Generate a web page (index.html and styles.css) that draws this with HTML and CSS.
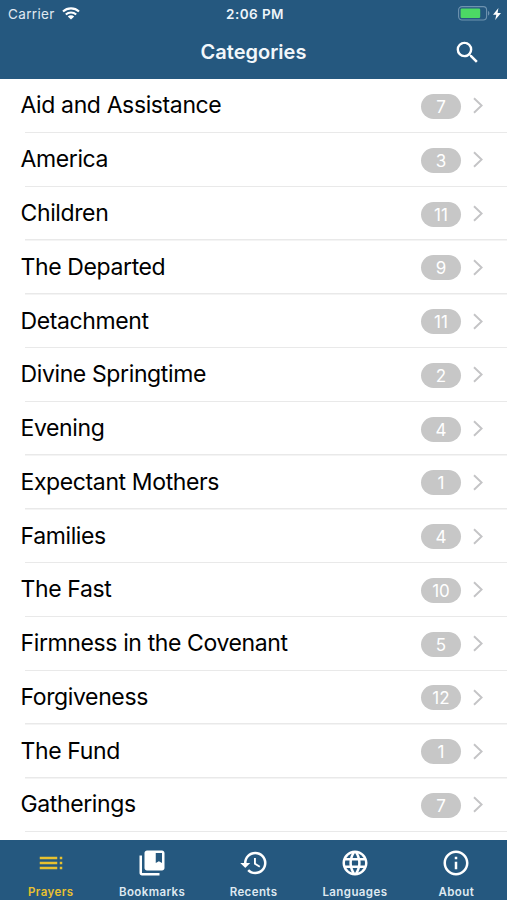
FILE: index.html
```html
<!DOCTYPE html>
<html lang="en">
<head>
    <meta charset="UTF-8">
    <meta name="viewport" content="width=device-width, initial-scale=1.0">
    <title>Categories</title>
    <link rel="stylesheet" href="styles.css">
</head>
<body>
    <header class="header">
        <!-- Status bar -->
        <div class="status-bar">
            <div class="carrier">
                <span>Carrier</span>
                <svg class="wifi" viewBox="0 0 18 13">
                    <path d="M1 4.6a11.6 11.6 0 0 1 16 0M3.8 7.5a7.6 7.6 0 0 1 10.4 0" fill="none" stroke="currentColor" stroke-width="2.1"/>
                    <path d="M9 12.6 5.8 9.5a4.6 4.6 0 0 1 6.4 0z" fill="currentColor"/>
                </svg>
            </div>
            <div class="time">2:06 PM</div>
            <div class="power">
                <svg class="battery" viewBox="0 0 32 15">
                    <rect x="0.6" y="0.6" width="28" height="13.4" rx="3.4" fill="none" stroke="#6f93b0" stroke-width="1.1"/>
                    <rect x="2.6" y="2.6" width="19.6" height="9.4" rx="1.2" fill="#4cd964"/>
                    <path d="M30 5v4.6c1.9-.7 1.9-3.9 0-4.6z" fill="#6f93b0"/>
                </svg>
                <svg class="bolt" viewBox="0 0 8 12">
                    <path d="M5.4 0 0 6.7h3.3L2.2 12 8 5H4.6z" fill="currentColor"/>
                </svg>
            </div>
        </div>
        <!-- Navigation bar -->
        <div class="nav-bar">
            <h1>Categories</h1>
            <button class="search-btn" aria-label="Search">
                <svg viewBox="0 0 24 24"><path d="M15.5 14h-.79l-.28-.27A6.471 6.471 0 0 0 16 9.5 6.5 6.5 0 1 0 9.5 16c1.61 0 3.09-.59 4.23-1.57l.27.28v.79l5 4.99L20.49 19l-4.99-5zm-6 0C7.01 14 5 11.99 5 9.5S7.01 5 9.5 5 14 7.01 14 9.5 11.99 14 9.5 14z"/></svg>
            </button>
        </div>
    </header>

    <main class="list" id="categoryList"></main>

    <nav class="tab-bar">
        <a class="tab active">
            <svg viewBox="0 0 24 24"><path d="M3 9h14V7H3v2zm0 4h14v-2H3v2zm0 4h14v-2H3v2zm16 0h2v-2h-2v2zm0-10v2h2V7h-2zm0 6h2v-2h-2v2z"/></svg>
            <span>Prayers</span>
        </a>
        <a class="tab">
            <svg viewBox="0 0 24 24"><path d="M4 6H2v14c0 1.1.9 2 2 2h14v-2H4V6z"/><path d="M20 2H8c-1.1 0-2 .9-2 2v12c0 1.1.9 2 2 2h12c1.1 0 2-.9 2-2V4c0-1.100-.9-2-2-2zm0 10l-2.500-1.500L15 12V4h5v8z"/></svg>
            <span>Bookmarks</span>
        </a>
        <a class="tab">
            <svg viewBox="0 0 24 24"><path d="M13 3a9 9 0 0 0-9 9H1l3.890 3.890.07.14L9 12H6c0-3.870 3.130-7 7-7s7 3.130 7 7-3.130 7-7 7c-1.930 0-3.680-.79-4.940-2.060l-1.420 1.420A8.954 8.954 0 0 0 13 21a9 9 0 0 0 0-18zm-1 5v5l4.280 2.540.72-1.210-3.500-2.080V8H12z"/></svg>
            <span>Recents</span>
        </a>
        <a class="tab">
            <svg viewBox="0 0 24 24"><path d="M11.990 2C6.470 2 2 6.480 2 12s4.470 10 9.990 10C17.520 22 22 17.520 22 12S17.520 2 11.990 2zm6.930 6h-2.950a15.650 15.650 0 0 0-1.380-3.560A8.030 8.030 0 0 1 18.920 8zM12 4.040c.83 1.200 1.480 2.530 1.910 3.960h-3.820c.43-1.430 1.080-2.760 1.910-3.960zM4.260 14C4.100 13.360 4 12.690 4 12s.1-1.360.26-2h3.380c-.08.66-.14 1.320-.14 2s.06 1.340.14 2H4.260zm.82 2h2.950c.32 1.250.78 2.450 1.380 3.560A7.987 7.987 0 0 1 5.080 16zm2.950-8H5.080a7.987 7.987 0 0 1 4.330-3.560A15.650 15.650 0 0 0 8.030 8zM12 19.960c-.83-1.200-1.480-2.530-1.910-3.960h3.820c-.43 1.430-1.080 2.760-1.910 3.960zM14.340 14H9.660c-.09-.66-.16-1.320-.16-2s.07-1.350.16-2h4.680c.09.65.16 1.320.16 2s-.07 1.340-.16 2zm.25 5.560c.6-1.110 1.060-2.310 1.380-3.560h2.950a8.030 8.030 0 0 1-4.330 3.560zM16.360 14c.08-.66.14-1.320.14-2s-.06-1.340-.14-2h3.380c.16.64.26 1.310.26 2s-.1 1.360-.26 2h-3.380z"/></svg>
            <span>Languages</span>
        </a>
        <a class="tab">
            <svg viewBox="0 0 24 24"><path d="M11 17h2v-6h-2v6zm1-15C6.480 2 2 6.480 2 12s4.480 10 10 10 10-4.480 10-10S17.520 2 12 2zm0 18c-4.410 0-8-3.590-8-8s3.590-8 8-8 8 3.590 8 8-3.590 8-8 8zM11 9h2V7h-2v2z"/></svg>
            <span>About</span>
        </a>
    </nav>

    <script>
        const categories = [
            ['Aid and Assistance', 7],
            ['America', 3],
            ['Children', 11],
            ['The Departed', 9],
            ['Detachment', 11],
            ['Divine Springtime', 2],
            ['Evening', 4],
            ['Expectant Mothers', 1],
            ['Families', 4],
            ['The Fast', 10],
            ['Firmness in the Covenant', 5],
            ['Forgiveness', 12],
            ['The Fund', 1],
            ['Gatherings', 7]
        ];

        // Fill the list with one row per category
        document.getElementById('categoryList').innerHTML = categories.map(([name, count]) => `
            <div class="row">
                <span class="name">${name}</span>
                <span class="count">${count}</span>
                <svg class="chevron" viewBox="0 0 10 17"><path d="M1 1.200 8.600 8.500 1 15.800"/></svg>
            </div>
        `).join('');
    </script>
</body>
</html>
```
FILE: styles.css
```css
* {
    box-sizing: border-box;
}

body {
    margin: 0;
    height: 100vh;
    display: flex;
    flex-direction: column;
    overflow: hidden;
    background: #fff;
    color: #000;
    font-family: Inter, "Liberation Sans", sans-serif;
}

svg {
    display: block;
    fill: currentColor;
}

/* Header */
.header {
    height: 79px;
    flex: none;
    background: #25587f;
    color: #fff;
}

.status-bar {
    display: grid;
    grid-template-columns: 1fr auto 1fr;
    align-items: center;
    height: 27px;
    padding: 0 6px 0 8px;
    font-size: 13.5px;
}

.carrier {
    display: flex;
    align-items: center;
    gap: 7px;
    letter-spacing: 0.35px;
    color: #e0e9f1;
}

.wifi {
    width: 18px;
    height: 13px;
    color: #fff;
}

.time {
    padding-left: 1px;
    font-weight: 600;
    letter-spacing: 0.45px;
    color: #eef4f9;
}

.power {
    display: flex;
    justify-content: flex-end;
    align-items: center;
    gap: 3px;
}

.battery {
    width: 32px;
    height: 15px;
}

.bolt {
    width: 8px;
    height: 12px;
}

.nav-bar {
    display: grid;
    grid-template-columns: 1fr auto 1fr;
    align-items: center;
    height: 50px;
    padding: 0 25px;
}

.nav-bar h1 {
    grid-column: 2;
    margin: 0;
    font-size: 20px;
    font-weight: 600;
    color: #f2f7fb;
}

.search-btn {
    justify-self: end;
    padding: 0;
    border: none;
    background: none;
    color: #fff;
}

.search-btn svg {
    width: 29px;
    height: 29px;
}

/* Category list */
.list {
    flex: 1;
    padding-top: 0.6px;
    overflow: hidden;
}

.row {
    display: flex;
    align-items: center;
    height: 53.77px;
    padding: 0 24px 0 20.5px;
    background: linear-gradient(#e9e9e9, #e9e9e9) 25px 100% / 100% 1.5px no-repeat;
}

.name {
    flex: 1;
    padding-bottom: 2px;
    font-size: 23px;
    letter-spacing: -0.38px;
}

.count {
    width: 40px;
    height: 25px;
    margin-right: 12px;
    padding-top: 1px;
    border-radius: 12.5px;
    background: #c7c7c7;
    color: #fff;
    font-size: 17px;
    line-height: 25px;
    text-align: center;
}

.chevron {
    width: 10px;
    height: 17px;
    margin-bottom: 1px;
    fill: none;
    stroke: #c4c4c6;
    stroke-width: 1.9;
}

/* Tab bar */
.tab-bar {
    display: flex;
    flex: none;
    height: 60px;
    background: #25587f;
    color: #fff;
}

.tab {
    flex: 1;
    display: flex;
    flex-direction: column;
    align-items: center;
    padding-top: 8px;
    font-size: 11.5px;
    font-weight: 600;
    line-height: 14px;
    letter-spacing: 0.4px;
}

.tab svg {
    width: 30px;
    height: 30px;
    margin-bottom: 7px;
}

.tab span {
    color: #dfe9f1;
}

.active,
.tab.active span {
    color: #e8c12f;
}
```
